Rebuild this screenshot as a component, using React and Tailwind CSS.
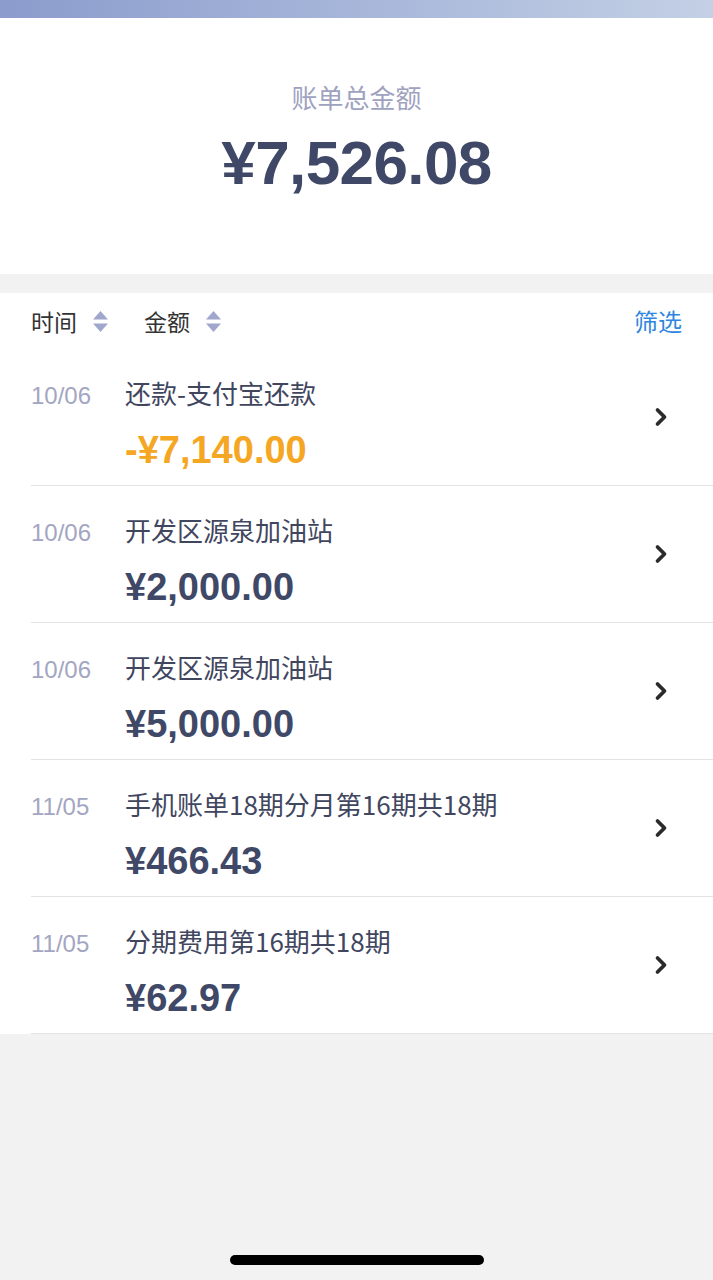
import { ChevronRight } from "lucide-react"

const rows = [
  { date: "10/06", title: "还款-支付宝还款", amount: "-¥7,140.00", refund: true },
  { date: "10/06", title: "开发区源泉加油站", amount: "¥2,000.00" },
  { date: "10/06", title: "开发区源泉加油站", amount: "¥5,000.00" },
  { date: "11/05", title: "手机账单18期分月第16期共18期", amount: "¥466.43" },
  { date: "11/05", title: "分期费用第16期共18期", amount: "¥62.97" },
]

const cjk = "font-['Noto_Sans_CJK_SC','Noto_Sans',sans-serif]"
const num = "font-['Liberation_Sans',Arial,sans-serif]"

function SortIcon() {
  return (
    <svg width="17" height="23" viewBox="0 0 17 23" className="ml-[15px]">
      <path d="M8.5 1 L16 9.5 H1 Z" fill="#a0a6cc" />
      <path d="M8.5 22 L16 13.5 H1 Z" fill="#a0a6cc" />
    </svg>
  )
}

export default function App() {
  return (
    <div className="min-h-[1280px] bg-[#f2f2f2] flex flex-col relative">
      <div className="h-[18px] bg-gradient-to-r from-[#8b9ccd] to-[#c3d0e5]" />

      <div className="bg-white h-[256px] flex flex-col items-center">
        <div className={`${cjk} mt-[61px] text-[26px] leading-[36px] text-[#9ea2bf]`}>
          账单总金额
        </div>
        <div className={`${num} mt-[17px] text-[62px] leading-[62px] font-bold text-[#3f4866] tracking-[-0.6px]`}>
          ¥7,526.08
        </div>
      </div>

      <div className="h-[19px]" />

      <div className="bg-white">
        <div className={`${cjk} h-[56px] flex items-center pl-[31px] pr-[31px] text-[23px] text-[#333333]`}>
          <span>时间</span>
          <SortIcon />
          <span className="ml-[35px]">金额</span>
          <SortIcon />
          <span className="ml-auto text-[24px] text-[#2f86e0]">筛选</span>
        </div>

        {rows.map((r, i) => (
          <div key={i} className="ml-[31px] border-b border-[#e3e3e3] flex items-center h-[137px]">
            <div className="w-[94px] self-start pt-[29px]">
              <span className={`${num} text-[24px] leading-[36px] text-[#a3a6c2]`}>{r.date}</span>
            </div>
            <div className="flex-1 self-start pt-[26px]">
              <div className={`${cjk} text-[26px] leading-[36px] text-[#41465f]`}>{r.title}</div>
              <div
                className={`${num} mt-[17px] text-[38px] leading-[44px] font-bold ${
                  r.refund ? "text-[#f5a623]" : "text-[#3f4866]"
                }`}
              >
                {r.amount}
              </div>
            </div>
            <ChevronRight className="mr-[38px] text-[#2b2b2b]" size={28} strokeWidth={3.2} />
          </div>
        ))}
      </div>

      <div className="absolute left-[230px] top-[1255px] w-[254px] h-[10px] rounded-full bg-black" />
    </div>
  )
}
